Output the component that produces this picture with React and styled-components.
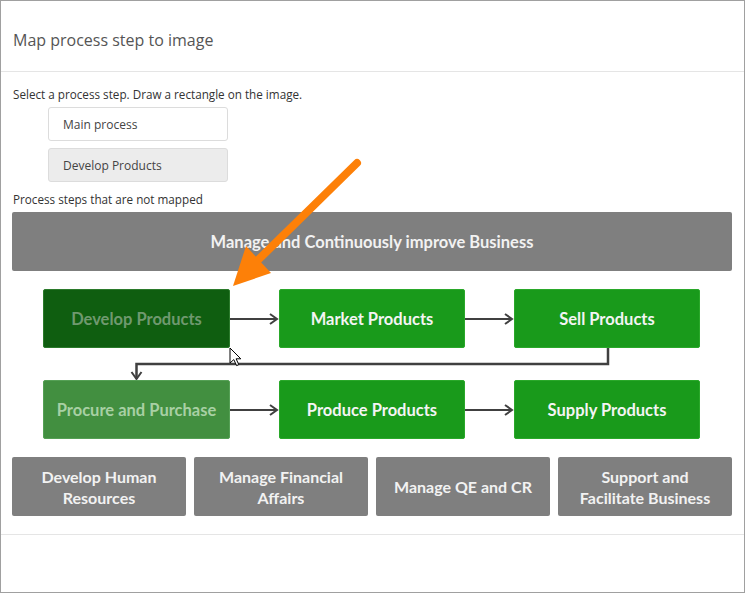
import React from "react";
import styled, { createGlobalStyle } from "styled-components";

const Global = createGlobalStyle`
  html, body { margin: 0; padding: 0; background: #fff; }
  * { box-sizing: border-box; }
`;

const Frame = styled.div`
  position: relative;
  width: 745px;
  height: 593px;
  border: 1px solid #a0a0a0;
  background: #fff;
  font-family: "Open Sans", "Liberation Sans", sans-serif;
  display: flex;
  flex-direction: column;
`;

const Header = styled.div`
  height: 71px;
  border-bottom: 1px solid #e5e5e5;
  display: flex;
  align-items: center;
  padding: 8px 12px 0;
`;

const Title = styled.h2`
  margin: 0;
  font-size: 16px;
  font-weight: 400;
  color: #555;
`;

const Body = styled.div`
  padding: 14px 12px 18px 11px;
  border-bottom: 1px solid #e5e5e5;
`;

const Hint = styled.div`
  font-size: 11.7px;
  line-height: 17px;
  color: #333;
  margin-left: 1px;
  margin-top: ${(p) => p.$mt || 0}px;
`;

const StepList = styled.div`
  margin: 4px 0 0 36px;
  width: 180px;
  display: flex;
  flex-direction: column;
  gap: 7px;
`;

const StepItem = styled.div`
  height: 34px;
  border: 1px solid #dcdcdc;
  border-radius: 3px;
  background: ${(p) => (p.$active ? "#ececec" : "#fff")};
  display: flex;
  align-items: center;
  padding-left: 14px;
  font-size: 12px;
  color: #444;
`;

const Diagram = styled.div`
  margin-top: 4px;
  width: 720px;
  display: flex;
  flex-direction: column;
  font-family: Lato, "Open Sans", sans-serif;
  font-weight: 700;
  font-size: 16.5px;
`;

const Bar = styled.div`
  height: 59px;
  background: #7f7f7f;
  border-radius: 2px;
  color: #f2f2f2;
  display: flex;
  align-items: center;
  justify-content: center;
  margin-bottom: 18px;
`;

const FlowRow = styled.div`
  display: flex;
  align-items: center;
  padding: 0 31px;
  height: 59px;
`;

const tones = {
  normal: { bg: "#199a1b", fg: "#f4f4f4", bd: "#2aa82a" },
  selected: { bg: "#0f5e10", fg: "#6f996f", bd: "#2b7a2b" },
  mapped: { bg: "#428f40", fg: "#a8d0a4", bd: "#55a055" },
};

const Step = styled.div`
  width: ${(p) => p.$w}px;
  height: 59px;
  background: ${(p) => tones[p.$tone].bg};
  color: ${(p) => tones[p.$tone].fg};
  border: 1px solid ${(p) => tones[p.$tone].bd};
  border-radius: 2px;
  display: flex;
  align-items: center;
  justify-content: center;
`;

const ArrowSvg = styled.svg`
  display: block;
  flex: none;
`;

const Elbow = styled.svg`
  display: block;
  height: 32px;
  width: 720px;
`;

const SupportRow = styled.div`
  margin-top: 18px;
  display: grid;
  grid-template-columns: repeat(4, 174px);
  gap: 8px;
`;

const Support = styled.div`
  height: 59px;
  background: #7f7f7f;
  border-radius: 2px;
  color: #f2f2f2;
  display: flex;
  align-items: center;
  justify-content: center;
  text-align: center;
  font-size: 16px;
  line-height: 21px;
`;

const Footer = styled.div`
  flex: 1;
`;

const Overlay = styled.svg`
  position: absolute;
  left: -1px;
  top: -1px;
  pointer-events: none;
`;

const Connector = () => (
  <ArrowSvg width="49" height="20" viewBox="0 0 49 20">
    <line x1="0" y1="10" x2="47" y2="10" stroke="#404040" strokeWidth="2" />
    <path d="M40 5 L47 10 L40 15" fill="none" stroke="#404040" strokeWidth="2" />
  </ArrowSvg>
);

export default function App() {
  return (
    <>
      <Global />
      <Frame>
        <Header>
          <Title>Map process step to image</Title>
        </Header>
        <Body>
          <Hint>Select a process step. Draw a rectangle on the image.</Hint>
          <StepList>
            <StepItem>Main process</StepItem>
            <StepItem $active>Develop Products</StepItem>
          </StepList>
          <Hint $mt={9}>Process steps that are not mapped</Hint>
          <Diagram>
            <Bar>Manage and Continuously improve Business</Bar>
            <FlowRow>
              <Step $w={187} $tone="selected">Develop Products</Step>
              <Connector />
              <Step $w={186} $tone="normal">Market Products</Step>
              <Connector />
              <Step $w={186} $tone="normal">Sell Products</Step>
            </FlowRow>
            <Elbow viewBox="0 0 720 32">
              <path
                d="M596 0 L596 16 L124.5 16 L124.5 31"
                fill="none"
                stroke="#404040"
                strokeWidth="2.5"
              />
              <path d="M119.5 24 L124.5 31 L129.5 24" fill="none" stroke="#404040" strokeWidth="2" />
            </Elbow>
            <FlowRow>
              <Step $w={187} $tone="mapped">Procure and Purchase</Step>
              <Connector />
              <Step $w={186} $tone="normal">Produce Products</Step>
              <Connector />
              <Step $w={186} $tone="normal">Supply Products</Step>
            </FlowRow>
            <SupportRow>
              <Support>Develop Human<br />Resources</Support>
              <Support>Manage Financial<br />Affairs</Support>
              <Support>Manage QE and CR</Support>
              <Support>Support and<br />Facilitate Business</Support>
            </SupportRow>
          </Diagram>
        </Body>
        <Footer />
        <Overlay width="745" height="593" viewBox="0 0 745 593">
          <line x1="357" y1="163" x2="255" y2="263" stroke="#fd8008" strokeWidth="8" strokeLinecap="round" />
          <path d="M233 286 L246 246 L271 273 Z" fill="#fd8008" />
          <path
            d="M230 348 L230 363 L233.8 359.6 L236.6 365.6 L238.8 364.6 L236.1 358.8 L240.8 358.8 Z"
            fill="#fff"
            stroke="#000"
            strokeWidth="1"
            strokeLinejoin="round"
          />
        </Overlay>
      </Frame>
    </>
  );
}
